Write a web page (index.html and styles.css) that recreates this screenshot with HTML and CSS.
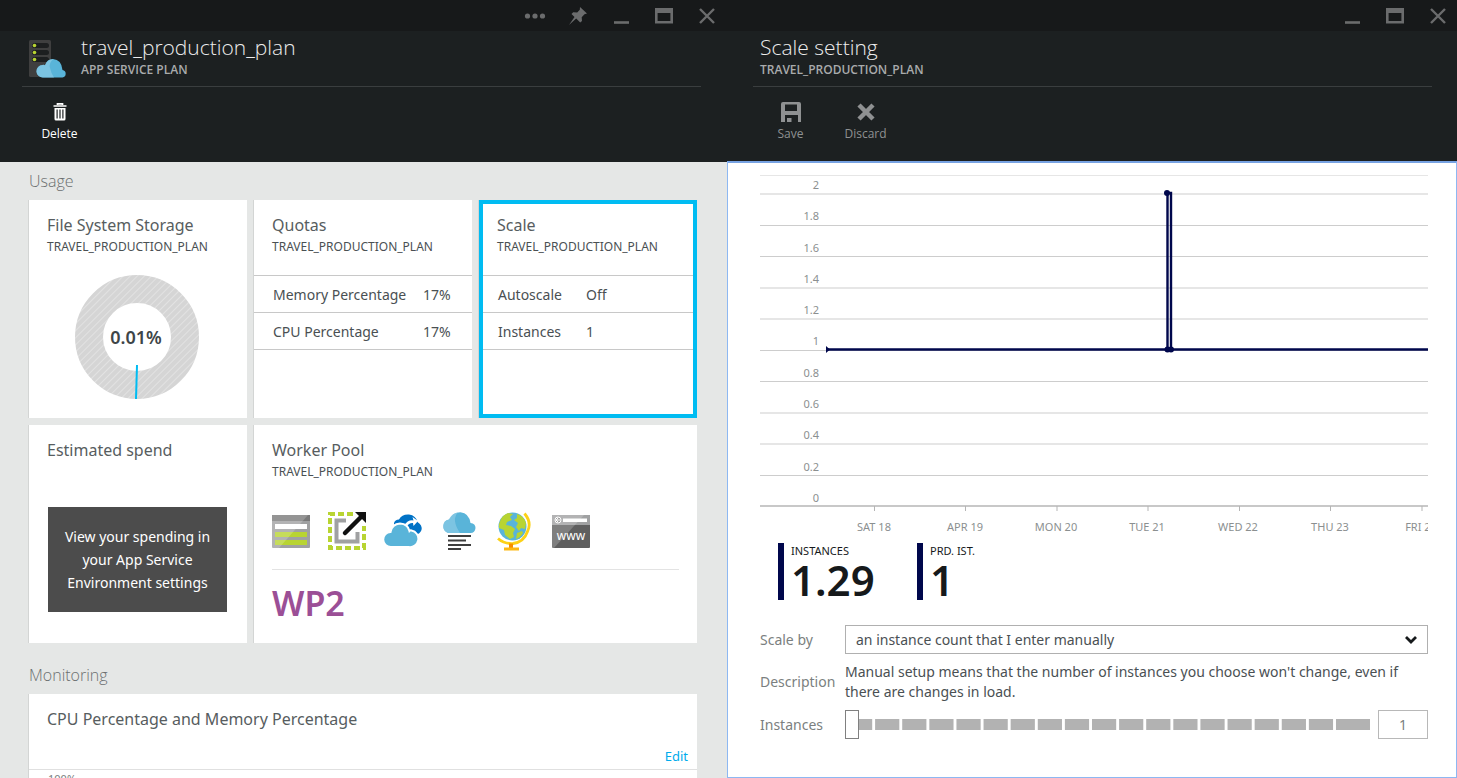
FILE: index.html
```
<!DOCTYPE html>
<html lang="en">
<head>
<meta charset="utf-8">
<title>Scale setting</title>
<link rel="stylesheet" href="styles.css">
</head>
<body>
<svg class="defs" width="0" height="0" aria-hidden="true">
  <symbol id="i-min" viewBox="0 0 20 20"><path d="M3 16.5h15" stroke="currentColor" stroke-width="2.6"/></symbol>
  <symbol id="i-max" viewBox="0 0 20 20"><path d="M1 2h18v15.500H1zM3.600 7v8h12.800V7z" fill="currentColor" fill-rule="evenodd"/></symbol>
  <symbol id="i-close" viewBox="0 0 20 20"><path d="M3 3l14 14M17 3L3 17" stroke="currentColor" stroke-width="2.400"/></symbol>
</svg>
<main class="blades">
  <section class="blade">
    <header class="head">
      <div class="titlebar">
        <button aria-label="More"><svg viewBox="0 0 24 20" width="24" height="20"><g fill="currentColor"><circle cx="4.500" cy="10" r="2.600"/><circle cx="12" cy="10" r="2.600"/><circle cx="19.500" cy="10" r="2.600"/></g></svg></button>
        <button aria-label="Pin"><svg viewBox="0 0 20 20" width="20" height="20"><path d="M12 1l7 6.500-2.500.800-2.800 2.900.300 3.800-1.800 1.500-4-4L1 19l5.500-8-3-3 1.700-1.700 4 .200 2.600-2.700z" fill="currentColor"/></svg></button>
        <button aria-label="Minimize"><svg width="20" height="20"><use href="#i-min"/></svg></button>
        <button aria-label="Maximize"><svg width="20" height="20"><use href="#i-max"/></svg></button>
        <button aria-label="Close"><svg width="20" height="20"><use href="#i-close"/></svg></button>
      </div>
      <div class="heading">
        <svg class="plan-icon" viewBox="0 0 40 40" width="40" height="40">
          <rect x="1" y="1" width="22" height="37" rx="1.500" fill="#3f3f3f"/>
          <g fill="#1d1f20"><rect x="4" y="4" width="17" height="5" rx="2.500"/><rect x="4" y="11" width="17" height="5" rx="2.500"/><rect x="4" y="18" width="17" height="5" rx="2.500"/></g>
          <g fill="#b8d432"><circle cx="6.500" cy="6.500" r="1.800"/><circle cx="6.500" cy="13.500" r="1.800"/><circle cx="6.500" cy="20.500" r="1.800"/></g>
          <path d="M15 38.500a6.300 6.300 0 0 1-.5-12.600q1-.2 2.500.3Q19 20 25 20q8.500.5 9.500 11a3.800 3.800 0 0 1 0 7.500z" fill="#59b4d9"/>
          <path d="M15 38.500a6.300 6.300 0 0 1-.5-12.600q1-.2 2.500.3Q19.500 20 25.500 20q-5 4-3.500 9 1 5 4 9.500z" fill="#8ccbe6" opacity=".7"/>
        </svg>
        <div>
          <h1>travel_production_plan</h1>
          <p>APP SERVICE PLAN</p>
        </div>
      </div>
      <div class="commands">
        <button class="enabled"><svg viewBox="0 0 22 22" width="22" height="22"><path d="M4.500 5h13M8.500 4V2.800h5V4" fill="none" stroke="currentColor" stroke-width="1.700"/><path d="M5.500 7h11v11q0 1.500-1.500 1.500H7q-1.500 0-1.500-1.500zM7.500 8.500V17.500h1.200V8.500zM10.400 8.500V17.500h1.200V8.500zM13.300 8.500V17.500h1.200V8.500z" fill="currentColor" fill-rule="evenodd"/></svg><span>Delete</span></button>
      </div>
    </header>
    <div class="lens">
      <h2>Usage</h2>
      <div class="tiles">
        <article class="tile">
          <h3>File System Storage</h3>
          <p class="sub">TRAVEL_PRODUCTION_PLAN</p>
          <svg class="donut" viewBox="0 0 126 126" width="126" height="126" role="img" aria-label="0.01%">
            <defs><pattern id="hatch" width="5" height="5" patternUnits="userSpaceOnUse" patternTransform="rotate(45)"><rect width="5" height="5" fill="#d5d5d5"/><rect width="1" height="5" fill="#e2e2e2"/></pattern></defs>
            <circle cx="62" cy="63" r="48" fill="none" stroke="url(#hatch)" stroke-width="28"/>
            <path d="M62 91L61 125" stroke="#00bcf2" stroke-width="2"/>
            <text x="61" y="70" text-anchor="middle">0.01%</text>
          </svg>
        </article>
        <article class="tile">
          <h3>Quotas</h3>
          <p class="sub">TRAVEL_PRODUCTION_PLAN</p>
          <table class="facts wide">
            <tr><th scope="row">Memory Percentage</th><td>17%</td></tr>
            <tr><th scope="row">CPU Percentage</th><td>17%</td></tr>
          </table>
        </article>
        <article class="tile selected">
          <h3>Scale</h3>
          <p class="sub">TRAVEL_PRODUCTION_PLAN</p>
          <table class="facts">
            <tr><th scope="row">Autoscale</th><td>Off</td></tr>
            <tr><th scope="row">Instances</th><td>1</td></tr>
          </table>
        </article>
        <article class="tile">
          <h3>Estimated spend</h3>
          <button class="spend">View your spending in your App Service Environment settings</button>
        </article>
        <article class="tile double">
          <h3>Worker Pool</h3>
          <p class="sub">TRAVEL_PRODUCTION_PLAN</p>
          <div class="pool">
            <svg viewBox="0 0 40 40" width="40" height="40"><rect x="1" y="4" width="38" height="33" rx="1" fill="#a0a1a2"/><path d="M1 4h38v6H1z" fill="#7a7a7a"/><path d="M4 13h32v5H4z" fill="#fff"/><path d="M4 21h32v5H4zM4 29h32v5H4z" fill="#b8d432"/><path d="M1 4h36L8 37H1z" fill="#fff" opacity=".200"/></svg>
            <svg viewBox="0 0 40 40" width="40" height="40"><path d="M26 3H3v34h34V15" fill="none" stroke="#b8d432" stroke-width="4" stroke-dasharray="6 3"/><path d="M19 9.500H9.500v21h21V21" fill="none" stroke="#a0a1a2" stroke-width="4"/><path d="M18 22L34 6" stroke="#111" stroke-width="4.500" stroke-linecap="round"/><path d="M28 1h11v11z" fill="#111"/></svg>
            <svg viewBox="0 0 40 40" width="40" height="40"><path d="M11 12q1-3.500 5-3.500Q19 3 26 3.500q7 1 8.500 7.500 5 3 4 8-1.500 4-6 5L11 14z" fill="#0072c6"/><path d="M21 14.500q4-6 9.500-5L29.500 6l5.500 4-4.500 5-.500-3q-4-.5-6.500 4z" fill="#fff"/><path d="M8 36a7.500 7.500 0 0 1-.500-15Q9 13 17 12.500 25 13 26.500 20q1-1 2-.500A7 7 0 0 1 25.500 36z" fill="#59b4d9" stroke="#fff" stroke-width="2"/></svg>
            <svg viewBox="0 0 40 40" width="40" height="40"><path d="M9 22a7 7 0 0 1 1-13.500Q14 1 21.500 1.200 30 2 31.500 12q5 .500 5 5-.500 5-5 5z" fill="#59b4d9"/><path d="M9 22A7 7 0 0 1 10 8.500 Q13 2 19 1.500q-7 7 2 20.500z" fill="#8ccbe6" opacity=".700"/><path d="M9 25h23M9 29.500h18M9 34h23M9 38h13" stroke="#3e3e3e" stroke-width="2"/></svg>
            <svg viewBox="0 0 40 40" width="40" height="40"><circle cx="17.500" cy="15.500" r="14" fill="#59b4d9"/><path d="M6 8q2-4 7-6l5 1-3 3 2 3-5 2-1 3 5 1 4 3-2 4 1 4-4 2-5-4-1-5-5-2v-4zM22 3q7 2 9 9l-1 6-4-1-2 3-3-4 2-4-4-3 3-2z" fill="#b8d432"/><path d="M22 22l5-2 1 2q-3 5-7 6z" fill="#b8d432"/><path d="M29.500 2.500q7.500 9 3 18Q29 31 18 32.500 9 33 3 27.500" fill="none" stroke="#fcd116" stroke-width="2.800"/><path d="M16 32.500v4.500" stroke="#f68d00" stroke-width="4"/><path d="M9 38h15" stroke="#fcb813" stroke-width="3"/></svg>
            <svg viewBox="0 0 40 40" width="40" height="40"><rect x="1" y="4" width="38" height="33" rx="1" fill="#5f5f5f"/><path d="M1 4h38v10H1z" fill="#a0a1a2"/><path d="M12 7.500h24v3.500H12z" fill="#fff"/><circle cx="7" cy="9" r="3" fill="#8a8a8a" stroke="#fff"/><path d="M9 9H5l2-2M5 9l2 2" fill="none" stroke="#fff"/><path d="M1 4h32L3 37H1z" fill="#fff" opacity=".200"/><text class="www" x="20" y="29" text-anchor="middle">www</text></svg>
          </div>
          <p class="pool-name">WP2</p>
        </article>
      </div>
      <h2>Monitoring</h2>
      <article class="tile monitor">
        <h3>CPU Percentage and Memory Percentage</h3>
        <a class="edit" href="#edit">Edit</a>
        <div class="axis-top">100%</div>
      </article>
    </div>
  </section>

  <section class="blade">
    <header class="head">
      <div class="titlebar">
        <button aria-label="Minimize"><svg width="20" height="20"><use href="#i-min"/></svg></button>
        <button aria-label="Maximize"><svg width="20" height="20"><use href="#i-max"/></svg></button>
        <button aria-label="Close"><svg width="20" height="20"><use href="#i-close"/></svg></button>
      </div>
      <div class="heading">
        <div>
          <h1>Scale setting</h1>
          <p>TRAVEL_PRODUCTION_PLAN</p>
        </div>
      </div>
      <div class="commands">
        <button disabled><svg viewBox="0 0 22 22" width="22" height="22"><path d="M1 3q0-2 2-2h16q2 0 2 2v18h-3v-7H5v7H1zM5 3.500V10h12V3.500z" fill="currentColor" fill-rule="evenodd"/><path d="M7 17h4.500v4H7z" fill="currentColor"/></svg><span>Save</span></button>
        <button disabled><svg viewBox="0 0 22 22" width="22" height="22"><path d="M4 4l14 14M18 4L4 18" stroke="currentColor" stroke-width="4.500"/></svg><span>Discard</span></button>
      </div>
    </header>
    <div class="panel">
      <svg class="chart" viewBox="0 0 668 365" role="img" aria-label="Instances over time">
        <path d="M0 .5H668" stroke="#e6e6e6"/>
        <path d="M0 19H668M0 50.500H668M0 81.500H668M0 113H668M0 144H668M0 175.500H668M0 206.500H668M0 238H668M0 269H668M0 300.500H668" stroke="#cdcdcd" stroke-width="1.200"/>
        <path d="M0 331H668" stroke="#c8c8c8" stroke-width="2"/>
        <path d="M114.500 331v5M205.500 331v5M297 331v5M388 331v5M479.500 331v5M570.500 331v5M662 331v5" stroke="#b5b5b5"/>
        <g class="ticks" text-anchor="end">
          <text x="59" y="14">2</text><text x="59" y="45">1.8</text><text x="59" y="77">1.6</text><text x="59" y="108">1.4</text><text x="59" y="139">1.2</text><text x="59" y="170">1</text><text x="59" y="202">0.8</text><text x="59" y="233">0.6</text><text x="59" y="264">0.4</text><text x="59" y="296">0.2</text><text x="59" y="327">0</text>
        </g>
        <g class="ticks" text-anchor="middle">
          <text x="114" y="356">SAT 18</text><text x="205" y="356">APR 19</text><text x="296" y="356">MON 20</text><text x="387" y="356">TUE 21</text><text x="478" y="356">WED 22</text><text x="570" y="356">THU 23</text><text x="661" y="356">FRI 24</text>
        </g>
        <path d="M67 174.500H407.500V18H411V174.500H668" fill="none" stroke="#00074c" stroke-width="2.400"/>
        <path d="M66 171l4 3.500-4 3.500z" fill="#00074c"/>
        <g fill="#00074c"><circle cx="407" cy="18" r="3"/><circle cx="407.500" cy="174.500" r="3"/><circle cx="411" cy="174.500" r="3"/></g>
      </svg>
      <dl class="metrics">
        <div><dt>INSTANCES</dt><dd>1.29</dd></div>
        <div><dt>PRD. IST.</dt><dd>1</dd></div>
      </dl>
      <form class="form">
        <label for="by">Scale by</label>
        <div class="pick">
          <select id="by"><option>an instance count that I enter manually</option></select>
          <svg viewBox="0 0 14 10" width="14" height="10" aria-hidden="true"><path d="M2 2l5 5 5-5" fill="none" stroke="#16191b" stroke-width="2.800"/></svg>
        </div>
        <span class="label">Description</span>
        <p>Manual setup means that the number of instances you choose won't change, even if there are changes in load.</p>
        <label for="count">Instances</label>
        <div class="amount">
          <input id="count" type="range" min="1" max="20" value="1">
          <input class="num" type="text" value="1" aria-label="Instance count">
        </div>
      </form>
    </div>
  </section>
</main>
</body>
</html>
```
FILE: styles.css
```
* { box-sizing: border-box; }
html, body { height: 100%; }
body {
  margin: 0;
  overflow: hidden;
  font-family: "Noto Sans", "Open Sans", sans-serif;
  font-size: 14px;
  line-height: 20px;
  color: #4a5053;
}
h1, h2, h3, p, dl, dd { margin: 0; font-weight: 400; }
button, input, select { font: inherit; color: inherit; margin: 0; }
button { border: 0; background: none; padding: 0; }
svg { display: block; }
.defs { position: absolute; }

.blades { display: grid; grid-template-columns: 727fr 730fr; height: 100%; }
.blade { display: flex; flex-direction: column; min-width: 0; min-height: 0; }

/* Blade header */
.head { flex: none; background: #1c2021; color: #ededed; height: 162px; font-family: "Open Sans", sans-serif; }
.titlebar {
  display: flex;
  justify-content: flex-end;
  align-items: center;
  gap: 3px;
  height: 31px;
  background: #17191a;
  color: #6b6c6d;
}
.titlebar button { display: flex; justify-content: center; width: 40px; }
.heading {
  display: flex;
  gap: 13px;
  height: 56px;
  margin: 0 26px 0 22px;
  padding: 2px 0 0 6px;
  border-bottom: 1px solid #3a3e3f;
}
.plan-icon { margin-top: 6px; }
h1 { font-size: 21px; line-height: 28px; font-weight: 300; }
.heading p { font-size: 12px; line-height: 18px; color: #a9abac; font-weight: 600; }
.commands { display: flex; margin-left: 22px; }
.commands button {
  display: flex;
  flex-direction: column;
  align-items: center;
  gap: 1px;
  width: 75px;
  height: 74px;
  padding-top: 14px;
  font-size: 12px;
  color: #8f9192;
}
.commands .enabled { color: #fff; }
.blade + .blade .head { height: 161px; }
.blade + .blade .titlebar { margin-right: -1px; }
.blade + .blade .heading { margin: 0 25px 0 26px; padding-left: 7px; }
.blade + .blade .commands { margin-left: 26px; }
.blade + .blade { overflow: hidden; }

/* Left blade content */
.lens { flex: 1; min-height: 0; overflow: hidden; background: #e5e7e6; padding: 0 30px 0 29px; }
h2 { font-family: "Open Sans", sans-serif; font-size: 16px; line-height: 38px; color: #6b6f70; font-weight: 300; }
.tiles { display: grid; grid-template-columns: repeat(3, 1fr); gap: 7px; margin-bottom: 13px; }
.tile {
  position: relative;
  height: 218px;
  padding-top: 13px;
  background: #fff;
  box-shadow: -1px 0 #d3d5d4;
}
.double { grid-column: span 2; }
.selected::after { content: ""; position: absolute; inset: 0; border: 4px solid #00bcf2; }
h3 { padding-left: 18px; font-size: 16px; line-height: 24px; font-weight: 400; color: #575d60; }
.sub { padding-left: 18px; font-size: 12px; line-height: 20px; }
.donut { margin: 17px auto 0; }
.donut text { font-size: 18px; font-weight: 600; fill: #3e4548; }
.facts { width: 100%; margin-top: 18px; border-collapse: collapse; border-top: 1px solid #c8c8c8; }
.facts tr { height: 37px; border-bottom: 1px solid #c8c8c8; }
.facts th, .facts td { padding: 1px 0 0; text-align: left; font-weight: 400; }
.facts th { width: 107px; padding-left: 19px; white-space: nowrap; }
.facts.wide th { width: 169px; }
.spend {
  display: block;
  width: calc(100% - 39px);
  margin: 45px 20px 0 19px;
  padding: 18px 8px;
  background: #4c4c4c;
  color: #fff;
  line-height: 23px;
}
.pool {
  display: flex;
  gap: 16px;
  margin: 29px 18px 0 18px;
  padding-bottom: 18px;
  border-bottom: 1px solid #e3e3e3;
}
.pool svg { margin: 0 0 0 -1px; flex: none; }
.pool svg + svg { margin-left: 0; }
.www { font-size: 12px; fill: #fff; }
.pool-name { padding-left: 18px; font-size: 34px; line-height: 66px; color: #9b4f96; font-weight: 600; }
.monitor { display: flex; flex-direction: column; }
.edit { align-self: flex-end; margin: 15px 9px 0 0; line-height: 20px; font-size: 13px; color: #00abec; text-decoration: none; }
.axis-top { margin-top: 3px; border-top: 1px solid #e0e0e0; padding-left: 19px; font-size: 11px; line-height: 17px; color: #7b7f80; }

/* Right blade content */
.panel { flex: 1; border: 1px solid #8db8f2; border-top: 2px solid #77a2e2; padding: 12px 28px 0 32px; background: #fff; }
.chart { width: 100%; height: auto; }
.ticks { font-size: 11px; fill: #8b8f90; }
.metrics { display: flex; margin: 3px 0 0 18px; }
.metrics div { width: 139px; height: 57px; padding-left: 7px; border-left: 6px solid #00074c; }
.metrics dt { font-size: 11px; line-height: 15px; color: #16191b; }
.metrics dd { font-size: 42px; line-height: 44px; font-weight: 600; color: #16191b; }
.form { display: grid; grid-template-columns: 85px 1fr; align-items: center; row-gap: 8px; margin-top: 25px; }
.form label, .label { color: #7b7f80; }
.pick { position: relative; }
.pick select { appearance: none; display: block; width: 100%; height: 29px; padding: 0 10px; border: 1px solid #b0b0b0; border-radius: 0; background: #fff; }
.pick svg { position: absolute; right: 10px; top: 10px; pointer-events: none; }
.amount { display: flex; align-items: center; gap: 8px; }
.num { width: 50px; height: 29px; border: 1px solid #b8b8b8; text-align: center; padding: 0; color: #7b7f80; }
input[type="range"] { appearance: none; flex: 1; min-width: 0; height: 29px; background: none; }
input[type="range"]::-webkit-slider-runnable-track {
  --step: calc((100% - 37px) / 18);
  height: 11px;
  background:
    linear-gradient(#b2b2b2, #b2b2b2) right / 34px 100% no-repeat,
    linear-gradient(to right, #b2b2b2 calc(100% - 3px), #fff calc(100% - 3px)) 3px 0 / var(--step) 100% repeat-x;
}
input[type="range"]::-webkit-slider-thumb { appearance: none; width: 14px; height: 29px; margin-top: -9px; border: 1px solid #808080; background: #fff; }
```
